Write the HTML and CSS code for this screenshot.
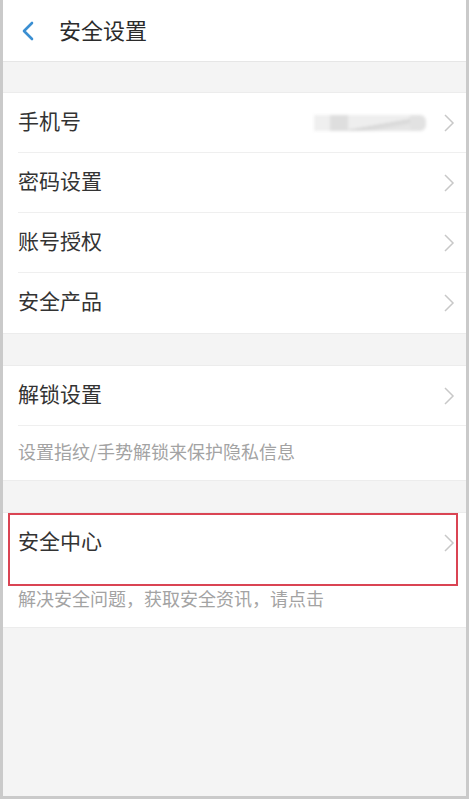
FILE: index.html
```html
<!DOCTYPE html>
<html lang="zh">
<head>
<meta charset="utf-8">
<title>安全设置</title>
<link rel="stylesheet" href="styles.css">
</head>
<body>
<div class="screen">
  <header class="topbar">
    <svg class="back" width="14" height="20" viewBox="0 0 14 20"><polyline points="11,2 3,10 11,18" fill="none" stroke="#3b8fd2" stroke-width="2.6" stroke-linecap="round" stroke-linejoin="round"/></svg>
    <h1 class="title">安全设置</h1>
  </header>

  <section class="group first">
    <div class="row">
      <span class="label">手机号</span>
      <span class="phone"><i class="b1"></i><i class="b2"></i><i class="b3"></i><i class="b4"></i></span>
      <svg class="chev" width="12" height="20" viewBox="0 0 12 20"><polyline points="2,2 10,10 2,18" fill="none" stroke="#c8c8c8" stroke-width="1.5"/></svg>
    </div>
    <div class="row">
      <span class="label">密码设置</span>
      <svg class="chev" width="12" height="20" viewBox="0 0 12 20"><polyline points="2,2 10,10 2,18" fill="none" stroke="#c8c8c8" stroke-width="1.5"/></svg>
    </div>
    <div class="row">
      <span class="label">账号授权</span>
      <svg class="chev" width="12" height="20" viewBox="0 0 12 20"><polyline points="2,2 10,10 2,18" fill="none" stroke="#c8c8c8" stroke-width="1.5"/></svg>
    </div>
    <div class="row last">
      <span class="label">安全产品</span>
      <svg class="chev" width="12" height="20" viewBox="0 0 12 20"><polyline points="2,2 10,10 2,18" fill="none" stroke="#c8c8c8" stroke-width="1.5"/></svg>
    </div>
  </section>

  <section class="group">
    <div class="row">
      <span class="label">解锁设置</span>
      <svg class="chev" width="12" height="20" viewBox="0 0 12 20"><polyline points="2,2 10,10 2,18" fill="none" stroke="#c8c8c8" stroke-width="1.5"/></svg>
    </div>
    <p class="sub">设置指纹/手势解锁来保护隐私信息</p>
  </section>

  <section class="group highlight-wrap">
    <div class="row nodiv">
      <span class="label">安全中心</span>
      <svg class="chev" width="12" height="20" viewBox="0 0 12 20"><polyline points="2,2 10,10 2,18" fill="none" stroke="#c8c8c8" stroke-width="1.5"/></svg>
    </div>
    <p class="sub">解决安全问题，获取安全资讯，请点击</p>
    <div class="highlight"></div>
  </section>
</div>
</body>
</html>
```

FILE: styles.css
```css
* { box-sizing: border-box; }
html, body { margin: 0; padding: 0; background: #ffffff; }
body {
  font-family: "Noto Sans CJK SC", "Noto Sans", sans-serif;
  width: 470px;
  height: 800px;
}
.screen {
  width: 469px;
  height: 799px;
  background: #f4f4f4;
  border-left: 3px solid #cacaca;
  border-right: 3px solid #cacaca;
  border-bottom: 3px solid #cacaca;
  display: flex;
  flex-direction: column;
}
.topbar {
  height: 62px;
  background: #ffffff;
  border-bottom: 1px solid #e6e6e6;
  display: flex;
  align-items: center;
  padding-left: 18px;
}
.back { margin-right: 24px; }
.title {
  margin: 0;
  padding-bottom: 4px;
  font-size: 22px;
  font-weight: 400;
  color: #2b2b2b;
  line-height: 1;
}
.group {
  background: #ffffff;
  margin-top: 31px;
  border-top: 1px solid #ececec;
  border-bottom: 1px solid #ececec;
}
.group.first { margin-top: 30px; }
.row {
  height: 60px;
  display: flex;
  align-items: center;
  padding: 0 11px 0 15px;
  position: relative;
}
.row::after {
  content: "";
  position: absolute;
  left: 15px;
  right: 0;
  bottom: 0;
  height: 1px;
  background: #efefef;
}
.row.last::after, .row.nodiv::after { display: none; }
.label {
  font-size: 21px;
  color: #333333;
  flex: 1;
  line-height: 1;
  padding-bottom: 5px;
}
.chev { flex: none; }
.phone {
  display: flex;
  height: 16px;
  width: 112px;
  margin-right: 17px;
  filter: blur(1.5px);
}
.phone i { display: block; height: 16px; }
.phone .b1 { width: 16px; background: #efefef; }
.phone .b2 { width: 18px; background: #dedede; }
.phone .b3 { width: 62px; background: linear-gradient(170deg, #eeeeee 55%, #d4d4d4 56%, #e6e6e6 80%); }
.phone .b4 { width: 16px; background: #e2e2e2; border-radius: 0 6px 6px 0; }
.sub {
  margin: 0;
  height: 54px;
  display: flex;
  align-items: center;
  padding-left: 15px;
  padding-bottom: 4px;
  font-size: 18px;
  color: #a3a3a3;
  line-height: 1;
}
.highlight-wrap { position: relative; }
.highlight {
  position: absolute;
  left: 5px;
  top: 0;
  width: 450px;
  height: 73px;
  border: 2px solid #da4453;
}
```
